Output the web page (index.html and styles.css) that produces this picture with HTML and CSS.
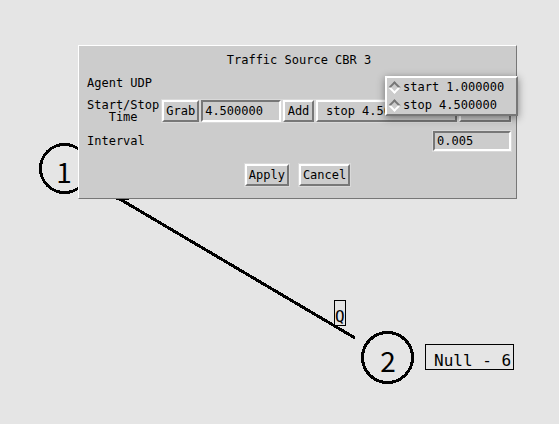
FILE: index.html
```html
<!DOCTYPE html>
<html lang="en">
<head>
<meta charset="utf-8">
<title>Traffic Source CBR 3</title>
<link rel="stylesheet" href="styles.css">
</head>
<body>
<main class="desktop">
  <svg class="network" aria-label="Network topology">
    <path class="link" d="M116 198H129M118 198L355 338"/>
    <circle class="node" cx="64.500" cy="168.500" r="24"/>
    <circle class="node" cx="387.500" cy="357.500" r="25"/>
    <text class="digit" x="64" y="183">1</text>
    <text class="digit" x="388" y="372">2</text>
    <rect class="box" x="334.500" y="300.500" width="11" height="25"/>
    <text class="tag" x="335" y="322">Q</text>
    <rect class="box" x="425.500" y="344.500" width="88" height="25"/>
    <text class="tag" x="434" y="366">Null - 6</text>
  </svg>

  <form class="dialog">
    <h1 class="title">Traffic Source CBR 3</h1>
    <p class="agent">Agent UDP</p>
    <div class="row">
      <label class="time-label" for="time">Start/Stop<br>Time</label>
      <div class="controls">
        <button class="button" type="button">Grab</button>
        <input class="entry time" id="time" type="text" value="4.500000">
        <button class="button add" type="button">Add</button>
        <button class="button events" type="button">stop 4.500000</button>
        <button class="button delete" type="button" aria-label="Delete"></button>
      </div>
    </div>
    <div class="row interval">
      <label for="interval">Interval</label>
      <input class="entry" id="interval" type="text" value="0.005">
    </div>
    <div class="actions">
      <button class="button" type="button">Apply</button>
      <button class="button" type="button">Cancel</button>
    </div>
    <div class="menu">
      <label class="choice"><input class="diamond" type="radio" name="event">start 1.000000</label>
      <label class="choice"><input class="diamond" type="radio" name="event">stop 4.500000</label>
    </div>
  </form>
</main>
</body>
</html>
```
FILE: styles.css
```css
* {
  box-sizing: border-box;
}

body {
  margin: 0;
  background: #e5e5e5;
  color: #000;
  font: 12px/12px "DejaVu Sans Mono", monospace;
}

.desktop {
  position: relative;
  min-height: 100vh;
  overflow: hidden;
}

.network {
  position: absolute;
  inset: 0;
  width: 100%;
  height: 100%;
}

.link,
.node {
  fill: none;
  stroke: #000;
  stroke-width: 3;
  shape-rendering: crispEdges;
}

.box {
  fill: none;
  stroke: #000;
}

.digit {
  font: 28px "Noto Sans CJK JP", sans-serif;
  text-anchor: middle;
}

.tag {
  font: 16px "DejaVu Sans Mono", monospace;
}

.dialog {
  position: absolute;
  top: 45px;
  left: 78px;
  right: 42px;
  padding: 8px 5px 12px 8px;
  background: #ccc;
  border: 1px solid;
  border-color: #fff #777 #777 #fff;
}

.title,
.agent {
  margin: 0;
  font: inherit;
}

.title {
  text-align: center;
}

.agent {
  margin: 11px 0 10px;
}

.row {
  display: flex;
  align-items: center;
  justify-content: space-between;
  gap: 3px;
}

.time-label {
  text-align: center;
}

.controls {
  display: flex;
  flex: 1;
  gap: 2px;
  background: #d9d9d9;
}

.button,
.entry {
  height: 22px;
  margin: 0;
  padding: 0 2px;
  border: 2px solid;
  border-radius: 0;
  outline: 1px solid #d9d9d9;
  outline-offset: 0;
  background: #ccc;
  color: #000;
  font: inherit;
  white-space: nowrap;
}

.button {
  border-color: #fff #777 #777 #fff;
}

.entry {
  width: 78px;
  border-color: #777 #fff #fff #777;
}

.time {
  flex: 1 1 78px;
  min-width: 0;
}

.add {
  flex: 0 0 31px;
}

.events {
  flex: 0 0 141px;
  padding: 0 8px;
  text-align: left;
}

.delete {
  flex: 0 0 52px;
}

.interval {
  margin-top: 8px;
}

.interval .entry {
  height: 20px;
}

.actions {
  display: flex;
  justify-content: center;
  gap: 10px;
  margin-top: 13px;
  padding-right: 3px;
}

.menu {
  position: absolute;
  top: 30px;
  right: -2px;
  width: 133px;
  border: 2px solid;
  border-color: #fff #777 #777 #fff;
  background: #ccc;
  box-shadow: 0 2px 8px rgb(0 0 0 / 45%);
}

.choice {
  display: flex;
  align-items: center;
  gap: 3px;
  height: 18px;
  padding-left: 2px;
}

.diamond {
  appearance: none;
  width: 9px;
  height: 9px;
  margin: 0 1px;
  border: 2px solid;
  border-color: #777 #fff #fff #777;
  transform: rotate(45deg);
}
```
